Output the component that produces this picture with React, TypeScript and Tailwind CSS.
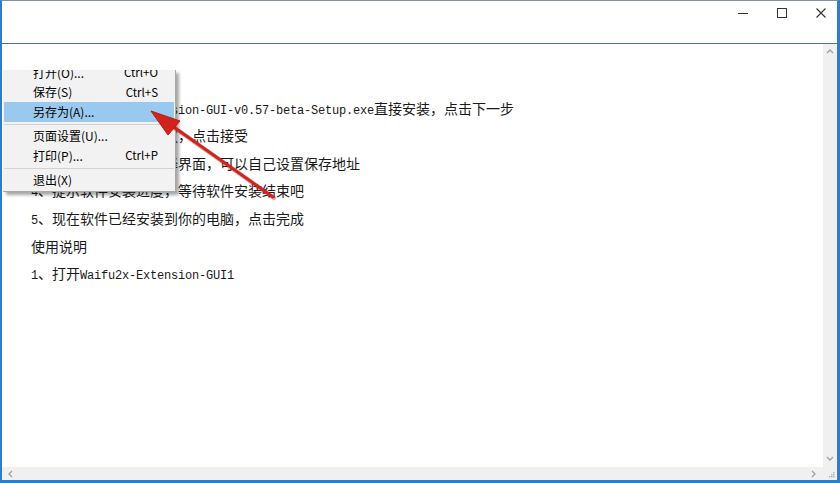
import React from 'react';

const lines = [
  '安装步骤',
  '1、双击Waifu2x-Extension-GUI-v0.57-beta-Setup.exe直接安装，点击下一步',
  '2、阅读软件的许可协议，点击接受',
  '3、进入软件的安装选择界面，可以自己设置保存地址',
  '4、提示软件安装进度，等待软件安装结束吧',
  '5、现在软件已经安装到你的电脑，点击完成',
  '使用说明',
  '1、打开Waifu2x-Extension-GUI1',
];

type MenuItem = { label: string; shortcut?: string; active?: boolean } | 'sep';

const menuItems: MenuItem[] = [
  { label: '打开(O)...', shortcut: 'Ctrl+O' },
  { label: '保存(S)', shortcut: 'Ctrl+S' },
  { label: '另存为(A)...', active: true },
  'sep',
  { label: '页面设置(U)...' },
  { label: '打印(P)...', shortcut: 'Ctrl+P' },
  'sep',
  { label: '退出(X)' },
];

function Mixed({ text }: { text: string }) {
  const parts = text.split(/([\x20-\x7e]+)/);
  return (
    <>
      {parts.map((p, i) =>
        /^[\x20-\x7e]+$/.test(p) ? (
          <span key={i} className="font-['Liberation_Mono',monospace] text-[12px] tracking-[-0.2px]">
            {p}
          </span>
        ) : (
          <span key={i}>{p}</span>
        )
      )}
    </>
  );
}

function Chevron({ dir }: { dir: 'up' | 'down' | 'left' | 'right' }) {
  const d = {
    up: 'M1 5 L4 2 L7 5',
    down: 'M1 2 L4 5 L7 2',
    left: 'M5 1 L2 4 L5 7',
    right: 'M2 1 L5 4 L2 7',
  }[dir];
  return (
    <svg width="8" height="8" viewBox="0 0 8 8">
      <path d={d} fill="none" stroke="#a0a0a0" strokeWidth="1.3" />
    </svg>
  );
}

function FileMenu() {
  return (
    <div className="absolute left-[1px] top-[26px] w-[173px] h-[122px] overflow-hidden bg-[#f2f2f2] border-r border-b border-[#a8a8a8] shadow-[3px_3px_3px_rgba(0,0,0,0.35)] font-['Noto_Sans_CJK_SC',sans-serif] text-[12px] text-black">
      <div className="-mt-[7px] px-px">
        {menuItems.map((item, i) =>
          item === 'sep' ? (
            <div key={i} className="h-[5px] flex items-center">
              <div className="h-px w-full bg-[#d2d2d2]" />
            </div>
          ) : (
            <div
              key={i}
              className={`h-[19.5px] flex items-center justify-between pl-[29px] pr-[16px] ${
                item.active ? 'bg-[#99c9ef]' : ''
              }`}
            >
              <span>{item.label}</span>
              {item.shortcut && <span className="text-[11.5px]">{item.shortcut}</span>}
            </div>
          )
        )}
      </div>
    </div>
  );
}

export default function App() {
  return (
    <div className="relative w-[840px] h-[483px] bg-white flex flex-col overflow-hidden border-t border-t-[#7d95aa] border-l-2 border-r-[3px] border-b-[3px] border-l-[#2f7dc4] border-r-[#2f7dc4] border-b-[#2f7dc4]">
      {/* title bar */}
      <div className="h-[42px] flex justify-end items-start pt-[7px] pr-[11px] gap-[29px] shrink-0">
        <div className="w-[10px] h-[10px] flex items-center">
          <div className="w-full h-px bg-[#333]" />
        </div>
        <div className="w-[10px] h-[10px] border border-[#333]" />
        <svg width="10" height="10" viewBox="0 0 10 10">
          <path d="M0.5 0.5 L9.5 9.5 M9.5 0.5 L0.5 9.5" stroke="#333" strokeWidth="1.1" />
        </svg>
      </div>
      <div className="h-px bg-[#56758b] shrink-0" />

      {/* editor */}
      <div className="flex-1 flex min-h-0">
        <div className="relative flex-1">
          <div className="pl-[29px] pt-[23px] leading-[27.6px] text-[14px] text-[#1a1a1a] font-['Noto_Sans_CJK_SC',sans-serif] whitespace-nowrap">
            {lines.map((l, i) => (
              <div key={i} className="h-[27.6px]">
                <Mixed text={l} />
              </div>
            ))}
          </div>
          <FileMenu />
        </div>
        <div className="w-[14px] bg-[#f0f0f0] flex flex-col justify-between items-center py-[4px]">
          <Chevron dir="up" />
          <Chevron dir="down" />
        </div>
      </div>
      <div className="h-[13px] flex shrink-0">
        <div className="flex-1 bg-[#f0f0f0] flex justify-between items-center px-[5px]">
          <Chevron dir="left" />
          <Chevron dir="right" />
        </div>
        <div className="w-[14px] bg-[#f0f0f0] flex items-end justify-end p-[2px]">
          <svg width="7" height="7" viewBox="0 0 7 7">
            <rect x="5" y="1" width="1.5" height="1.5" fill="#b5b5b5" />
            <rect x="3" y="3" width="1.5" height="1.5" fill="#b5b5b5" />
            <rect x="5" y="3" width="1.5" height="1.5" fill="#b5b5b5" />
            <rect x="1" y="5" width="1.5" height="1.5" fill="#b5b5b5" />
            <rect x="3" y="5" width="1.5" height="1.5" fill="#b5b5b5" />
            <rect x="5" y="5" width="1.5" height="1.5" fill="#b5b5b5" />
          </svg>
        </div>
      </div>

      {/* annotation arrow */}
      <svg className="absolute -left-[2px] -top-px pointer-events-none" width="840" height="483" viewBox="0 0 840 483">
        <line x1="273" y1="197" x2="168" y2="123" stroke="#8f1410" strokeOpacity="0.35" strokeWidth="4.5" strokeLinecap="round" transform="translate(1 1)" />
        <line x1="273" y1="197" x2="168" y2="123" stroke="#d3221d" strokeWidth="3" strokeLinecap="round" />
        <polygon points="151,111 180,121 168,135" fill="#d3221d" stroke="#b81a16" strokeWidth="1" strokeLinejoin="round" />
      </svg>
    </div>
  );
}
